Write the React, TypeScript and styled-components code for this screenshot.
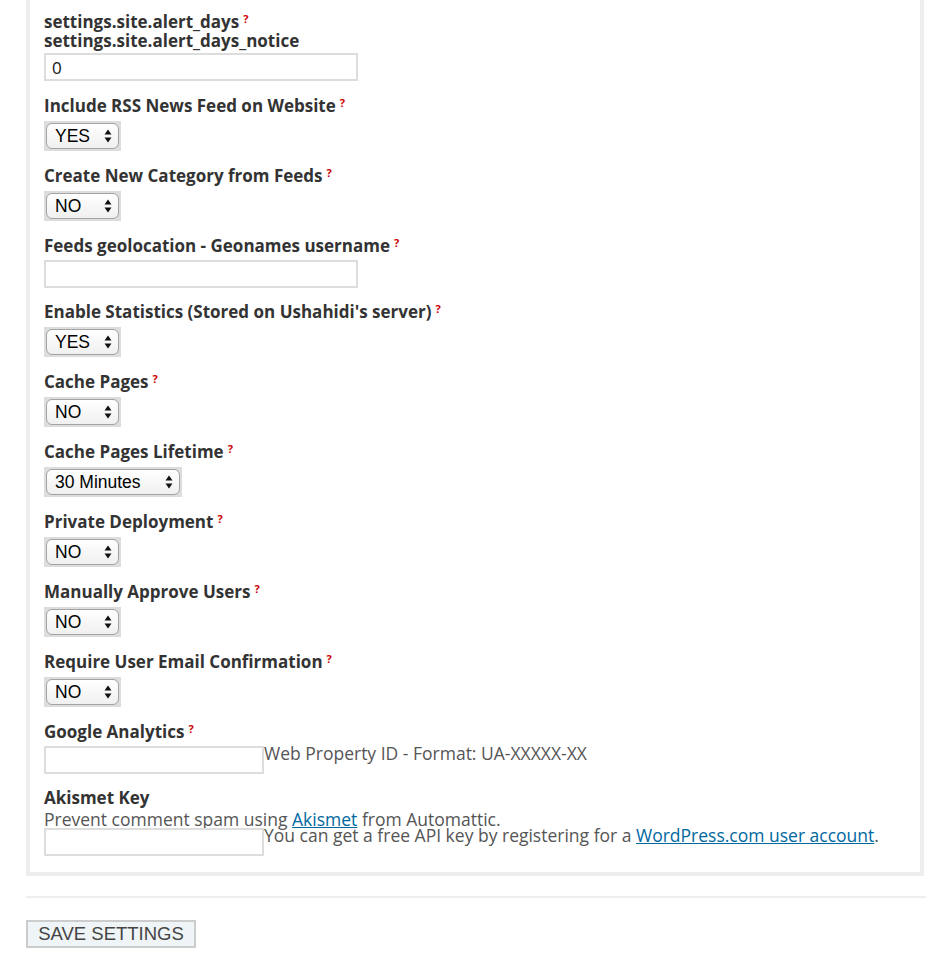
import React from "react";
import styled, { createGlobalStyle } from "styled-components";

const GlobalStyle = createGlobalStyle`
  html, body {
    margin: 0;
    padding: 0;
    background: #ffffff;
  }
  body {
    font-family: "Open Sans", "DejaVu Sans", sans-serif;
    color: #333;
  }
`;

const Page = styled.div`
  width: 900px;
  padding: 0 26px 20px 26px;
`;

const Panel = styled.div`
  width: 862px;
  border: 4px solid #eeeeee;
  border-top: none;
  padding: 12px 14px 16px 14px;
`;

const Field = styled.div<{ $gap?: number }>`
  margin-bottom: ${(p) => p.$gap ?? 0}px;
`;

const Label = styled.div`
  font-size: 17px;
  line-height: 19px;
  font-weight: 700;
  color: #333;
  white-space: nowrap;
`;

const Help = styled.sup`
  color: #cc0000;
  font-size: 11px;
  font-weight: 700;
  margin-left: 4px;
  vertical-align: 5px;
  line-height: 0;
`;

const Note = styled.div<{ $top?: number }>`
  font-size: 17.5px;
  line-height: 19px;
  color: #555;
  margin-top: ${(p) => p.$top ?? 0}px;
  white-space: nowrap;
`;

const Link = styled.a`
  color: #00689f;
  text-decoration: underline;
`;

const TextInput = styled.input<{ $w: number; $top?: number }>`
  display: block;
  flex: none;
  box-sizing: border-box;
  width: ${(p) => p.$w}px;
  height: 28px;
  margin: ${(p) => p.$top ?? 5}px 0 0 0;
  border: 2px solid #dddddd;
  padding: 0 6px;
  font-family: "Open Sans", "DejaVu Sans", sans-serif;
  font-size: 17px;
  color: #111;
  background: #fff;
  outline: none;
`;

const InlineRow = styled.div<{ $top?: number }>`
  display: flex;
  align-items: flex-start;
  margin-top: ${(p) => p.$top ?? 5}px;
`;

const SideText = styled.span`
  font-size: 17.5px;
  line-height: 19px;
  color: #555;
  margin-top: -2px;
  white-space: nowrap;
`;

const SelectFrame = styled.div`
  display: inline-flex;
  margin-top: 6px;
  padding: 2px;
  background: #dddddd;
  vertical-align: top;
`;

const SelectBox = styled.div`
  position: relative;
  display: flex;
`;

const NativeSelect = styled.select<{ $w: number }>`
  appearance: none;
  -webkit-appearance: none;
  box-sizing: border-box;
  width: ${(p) => p.$w}px;
  height: 26px;
  margin: 0;
  padding: 0 20px 0 8px;
  border: 1px solid #a3a3a3;
  border-radius: 6px;
  background: linear-gradient(#ffffff, #f0f0f0);
  font-family: "Liberation Sans", Arial, sans-serif;
  font-size: 17.5px;
  color: #000;
  outline: none;
`;

const Arrows = styled.svg`
  position: absolute;
  right: 7px;
  top: 6px;
  pointer-events: none;
`;

const Divider = styled.hr`
  border: none;
  height: 2px;
  background: #eeeeee;
  margin: 20px 0 0 0;
  width: 900px;
`;

const SaveButton = styled.button`
  margin-top: 22px;
  box-sizing: border-box;
  width: 170px;
  height: 28px;
  border: 2px solid #cccccc;
  background: #eff4f7;
  color: #444;
  font-family: "Liberation Sans", Arial, sans-serif;
  font-size: 18.5px;
  padding: 0;
  display: flex;
  align-items: center;
  justify-content: center;
`;

type SelectProps = { value: string; options: string[]; width: number };

const Select: React.FC<SelectProps> = ({ value, options, width }) => (
  <div>
    <SelectFrame>
      <SelectBox>
        <NativeSelect $w={width} defaultValue={value}>
          {options.map((o) => (
            <option key={o} value={o}>
              {o}
            </option>
          ))}
        </NativeSelect>
        <Arrows width="8" height="14" viewBox="0 0 8 14">
          <polygon points="4,0.5 7.5,5.5 0.5,5.5" fill="#111" />
          <polygon points="0.5,8.5 7.5,8.5 4,13.5" fill="#111" />
        </Arrows>
      </SelectBox>
    </SelectFrame>
  </div>
);

const YESNO = ["YES", "NO"];

const SelectField: React.FC<{ label: string; value: string; options?: string[]; width?: number }> = ({
  label,
  value,
  options = YESNO,
  width = 73,
}) => (
  <Field $gap={15}>
    <Label>
      {label}
      <Help>?</Help>
    </Label>
    <Select value={value} options={options} width={width} />
  </Field>
);

export default function App() {
  return (
    <>
      <GlobalStyle />
      <Page>
        <Panel>
          <Field $gap={15}>
            <Label>
              settings.site.alert_days
              <Help>?</Help>
            </Label>
            <Label>settings.site.alert_days_notice</Label>
            <TextInput $w={314} $top={3} defaultValue="0" />
          </Field>
          <SelectField label="Include RSS News Feed on Website" value="YES" />
          <SelectField label="Create New Category from Feeds" value="NO" />
          <Field $gap={14}>
            <Label>
              Feeds geolocation - Geonames username
              <Help>?</Help>
            </Label>
            <TextInput $w={314} />
          </Field>
          <SelectField label="Enable Statistics (Stored on Ushahidi's server)" value="YES" />
          <SelectField label="Cache Pages" value="NO" />
          <SelectField
            label="Cache Pages Lifetime"
            value="30 Minutes"
            options={["1 Minute", "5 Minutes", "10 Minutes", "30 Minutes", "1 Hour", "6 Hours", "1 Day"]}
            width={134}
          />
          <SelectField label="Private Deployment" value="NO" />
          <SelectField label="Manually Approve Users" value="NO" />
          <SelectField label="Require User Email Confirmation" value="NO" />
          <Field $gap={14}>
            <Label>
              Google Analytics
              <Help>?</Help>
            </Label>
            <InlineRow>
              <TextInput $w={220} $top={0} />
              <SideText>Web Property ID - Format: UA-XXXXX-XX</SideText>
            </InlineRow>
          </Field>
          <Field>
            <Label>Akismet Key</Label>
            <Note $top={3}>
              Prevent comment spam using <Link href="#">Akismet</Link> from Automattic.
            </Note>
            <InlineRow $top={-1}>
              <TextInput $w={220} $top={0} />
              <SideText>
                You can get a free API key by registering for a{" "}
                <Link href="#">WordPress.com user account</Link>.
              </SideText>
            </InlineRow>
          </Field>
        </Panel>
        <Divider />
        <SaveButton>SAVE SETTINGS</SaveButton>
      </Page>
    </>
  );
}
